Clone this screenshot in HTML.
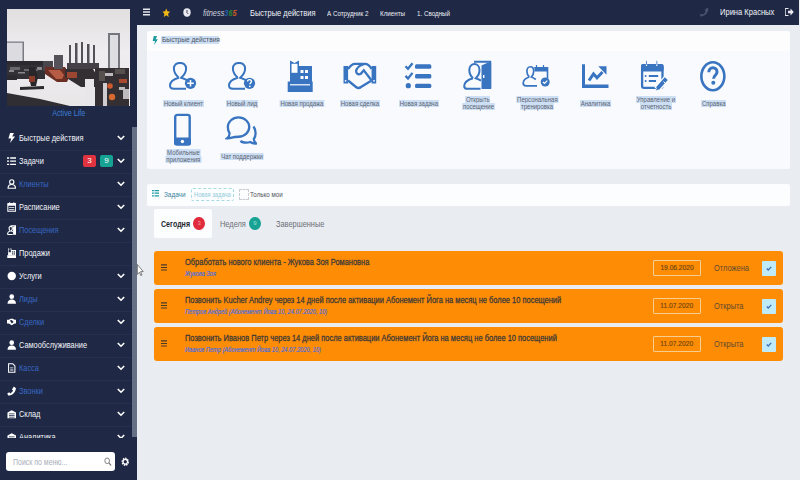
<!DOCTYPE html>
<html><head><meta charset="utf-8">
<style>
*{margin:0;padding:0;box-sizing:border-box}
html,body{width:800px;height:480px;overflow:hidden;background:#e9ecf1;font-family:"Liberation Sans",sans-serif}
.a{position:absolute;white-space:nowrap}
#side{position:absolute;left:0;top:0;width:137px;height:480px;background:#1f2946}
#top{position:absolute;left:137px;top:0;width:662px;height:25px;background:#1f2946}
#main{position:absolute;left:137px;top:25px;width:663px;height:455px;background:#e9ecf1}
.mi{position:absolute;left:0;width:131px;height:23px;color:#f4f4f8;font-size:9px}
.mi .t{position:absolute;left:19px;top:6.2px;transform:scaleX(.82)}
.mi .ic{position:absolute;left:6.5px;top:5.5px;width:9.5px;height:10px}
.mi .ch{position:absolute;left:117px;top:8px;width:8px;height:6px}
.mi.bl .t{color:#3866c0}
.sep{position:absolute;left:0;width:131px;height:1px;background:#283052}
.panel{position:absolute;background:#fcfdff;border-radius:2px}
.qi{position:absolute;width:60px;text-align:center}
.lbl{position:absolute;font-size:7.5px;color:#5a6270;background:#cfe0f4;line-height:7px;padding:0 1px}
.card{position:absolute;left:154px;width:629px;height:34px;background:#ff8c05;border-radius:3px}
.card .tt{position:absolute;left:31px;top:6px;font-size:9px;color:#403b36;-webkit-text-stroke:.3px #403b36}
.card .st{position:absolute;left:31px;top:19px;font-size:6.6px;color:#3d6ee0;font-style:italic;-webkit-text-stroke:.15px #3d6ee0}
.card .hb{position:absolute;left:7px;top:13px;width:6px;height:7px}
.card .dt{position:absolute;left:499px;top:9px;width:48px;height:16px;border:1px solid #f6cf90;border-radius:1px;font-size:8px;color:#6a4412;text-align:center;line-height:14px;-webkit-text-stroke:.15px #6a4412}
.card .ss{position:absolute;left:560px;top:11.5px;font-size:9px;color:#5e4a30}
.card .cb{position:absolute;left:608px;top:9.5px;width:14px;height:15px;background:#bfeaf7;border-radius:1px}

.n{display:inline-block;transform:scaleX(.8);transform-origin:0 0}
.bdg{position:absolute;top:5px;width:13px;height:12px;border-radius:2px;color:#fff;font-size:8px;text-align:center;line-height:12px}
#menu{position:absolute;left:0;top:0;width:131px;height:438px;overflow:hidden}
#sb{position:absolute;left:132px;top:127px;width:5px;height:310px;background:#667084}
#search{position:absolute;left:6px;top:452px;width:109px;height:19px;background:#fff;border-radius:3px}
#search .ph{position:absolute;left:7px;top:4.5px;font-size:8.5px;color:#a9aeb8;transform:scaleX(.82)}

.hl{background:#cddff4}
.lbl{position:absolute;width:80px;text-align:center;font-size:7.5px;line-height:7px;color:#5c6370;background:none}
.lbl2{position:absolute;width:80px;text-align:center;font-size:7.5px;line-height:7px;color:#5c6370}
.lbl2 span{display:block;margin:0 auto;width:max-content;background:#cddff4;transform:scaleX(.8);transform-origin:50% 0;padding:0 1px}
.lbl span{display:inline-block;background:#cddff4;transform:scaleX(.8);transform-origin:50% 0;padding:0 1px}
</style></head>
<body>
<div id="side">
<svg class="a" style="left:7px;top:9px" width="123" height="97" viewBox="0 0 123 97">
<defs><linearGradient id="ceil" x1="0" y1="0" x2="0" y2="1"><stop offset="0" stop-color="#e2dfe0"/><stop offset=".45" stop-color="#efedf0"/><stop offset="1" stop-color="#e8e6e7"/></linearGradient></defs>
<rect width="123" height="97" fill="url(#ceil)"/>
<path d="M0 33h16v19h-16z" fill="#dcdbe0"/>
<path d="M0 32.5h17v1.2h-17zM15.5 33h1.5v20h-1.5z" fill="#7a7a82"/>
<path d="M0 52h38v4h-38z" fill="#2c2a2e"/>
<path d="M0 56h38v14h-38z" fill="#333036"/><path d="M2 61h5v2h-5zM11 63h7v1.5h-7zM30 58h5v3h-5z" fill="#8a888c"/>
<path d="M3 58h10v3h-10zM17 60h14v2h-14z" fill="#6a666c"/>
<path d="M0 66h10v5h-10z" fill="#2c2a2e"/>
<path d="M22 58h6l3 10-2 9h-5l-2-9z" fill="#29262a"/>
<path d="M22 67h6v6h-6z" fill="#8a3c2c"/>
<path d="M13 78l24-1v3l-24 1z" fill="#2e2b2e"/>
<path d="M36 52h10v10h-10z" fill="#4a454a"/>
<path d="M38 58h20l5 8-3 7h-10l-12-8z" fill="#6a2e24"/>
<path d="M41 61h12l4 5-2 4h-6z" fill="#b65c44"/>
<path d="M47 46h9v14h-9z" fill="#56525a"/>
<path d="M62 36h2v18h-2zM68 34h2.5v20h-2.5zM74 33h2v22h-2zM80 35h2.5v20h-2.5zM86 36h2v18h-2z" fill="#555058"/>
<path d="M60 54h32v6h-32z" fill="#454046"/>
<path d="M58 60h28l6 10-4 8h-14l-16-10z" fill="#332f32"/>
<path d="M60 63h10v6h-10z" fill="#9c4632"/>
<path d="M101 24h2v40h-2zM111 24h2v40h-2zM101 24h12v2h-12z" fill="#76767e"/>
<rect x="103" y="26" width="8" height="38" fill="#dedee2"/>
<path d="M0 84l33 6 30 7h-63z" fill="#302e32"/>
<path d="M78 70h9v27h-9z" fill="#e8e6e8"/>
<path d="M88 59h34v38h-34z" fill="#332f32"/><path d="M98 64h8v3h-8zM112 78h6v3h-6z" fill="#bcbabd"/>
<path d="M92 62h6v10h-6zM108 60h10v5h-10z" fill="#56504f"/>
<path d="M96 74h4v23h-4z" fill="#cfcdd0"/>
<circle cx="103" cy="77" r="2.8" fill="#cc5a2c"/>
<circle cx="105" cy="88" r="3.2" fill="#d8692f"/>
<path d="M112 70h8v4h-8z" fill="#a8482e"/>
<path d="M116 80h6v10h-6z" fill="#bdbbbe"/>
</svg>
<div class="a" style="left:0;top:108px;width:137px;text-align:center;font-size:9px;color:#3d7fd8"><span class="n" style="transform-origin:50% 0">Active Life</span></div>
<div id="menu">
<div class="mi" style="top:127px"><svg class="ic" viewBox="0 0 8 9"><path d="M2.5 0h3.5l-1.6 3.2h2.6l-4.5 5.8 1-4h-2.5z" fill="#fff"/></svg><span class="t n">Быстрые действия</span><svg class="ch" viewBox="0 0 8 6"><path d="M0.8 1l3.2 3.2 3.2-3.2" fill="none" stroke="#fff" stroke-width="1.6"/></svg></div>
<div class="sep" style="top:150px"></div>
<div class="mi" style="top:150px"><svg class="ic" viewBox="0 0 9 9"><path d="M0 1h2v1.3h-2zM3 1h6v1.3h-6zM0 4h2v1.3h-2zM3 4h6v1.3h-6zM0 7h2v1.3h-2zM3 7h6v1.3h-6z" fill="#fff"/></svg><span class="t n">Задачи</span><svg class="ch" viewBox="0 0 8 6"><path d="M0.8 1l3.2 3.2 3.2-3.2" fill="none" stroke="#fff" stroke-width="1.6"/></svg><span class="bdg" style="left:83px;background:#e0333f">3</span><span class="bdg" style="left:100px;background:#16a394">9</span></div>
<div class="sep" style="top:173px"></div>
<div class="mi bl" style="top:173px"><svg class="ic" viewBox="0 0 9 9"><circle cx="4.5" cy="2.5" r="2" fill="none" stroke="#fff" stroke-width="1.1"/><path d="M1 8.5c0-2.5 1.5-3.5 3.5-3.5s3.5 1 3.5 3.5z" fill="none" stroke="#fff" stroke-width="1.1"/></svg><span class="t n">Клиенты</span><svg class="ch" viewBox="0 0 8 6"><path d="M0.8 1l3.2 3.2 3.2-3.2" fill="none" stroke="#fff" stroke-width="1.6"/></svg></div>
<div class="sep" style="top:196px"></div>
<div class="mi" style="top:196px"><svg class="ic" viewBox="0 0 9 9"><rect x="0.8" y="1.3" width="7.4" height="7.2" fill="none" stroke="#fff" stroke-width="1"/><path d="M0.8 1.3h7.4v2h-7.4z M2 0h1v2h-1zM6 0h1v2h-1z M2 4.5h5v.8h-5zM2 6.3h5v.8h-5z" fill="#fff"/></svg><span class="t n">Расписание</span><svg class="ch" viewBox="0 0 8 6"><path d="M0.8 1l3.2 3.2 3.2-3.2" fill="none" stroke="#fff" stroke-width="1.6"/></svg></div>
<div class="sep" style="top:219px"></div>
<div class="mi bl" style="top:219px"><svg class="ic" viewBox="0 0 29 30" preserveAspectRatio="none"><path d="M11 2.5H26.5V28" fill="none" stroke="#fff" stroke-width="3.5"/><path d="M18.5 6L25 3H28.5V29.5H18.5z" fill="#fff"/><path d="M10 18.2C7.2 15.6 6.3 12.6 6.3 10 6.3 6.3 8.7 4.1 11.4 4.1S16.5 6.3 16.5 10C16.5 12.6 15.6 15.6 12.8 18.2 14.8 18.9 16.5 19.7 18 20.7M10 18.2C5 19.7 1.8 22.7 1.8 25.9 1.8 27.9 3 28.4 4.6 28.4H17.5" fill="none" stroke="#fff" stroke-width="3.4"/></svg><span class="t n">Посещения</span><svg class="ch" viewBox="0 0 8 6"><path d="M0.8 1l3.2 3.2 3.2-3.2" fill="none" stroke="#fff" stroke-width="1.6"/></svg></div>
<div class="sep" style="top:242px"></div>
<div class="mi" style="top:242px"><svg class="ic" viewBox="0 0 26 30" preserveAspectRatio="none"><path d="M3 0.5L7.5 3 12 0.5V6h13v16h-22z" fill="#fff"/><rect x="4.5" y="3.8" width="6" height="9" fill="#1f2946"/><rect x="13.5" y="10" width="3.5" height="3.5" fill="#1f2946"/><rect x="18.5" y="10" width="3.5" height="3.5" fill="#1f2946"/><rect x="13.5" y="16" width="3.5" height="3.5" fill="#1f2946"/><rect x="18.5" y="16" width="3.5" height="3.5" fill="#1f2946"/><rect x="0.7" y="21.5" width="25" height="8.5" fill="#fff"/></svg><span class="t n">Продажи</span></div>
<div class="sep" style="top:265px"></div>
<div class="mi" style="top:265px"><svg class="ic" viewBox="0 0 9 9"><circle cx="4.5" cy="4.5" r="4" fill="#fff"/></svg><span class="t n">Услуги</span><svg class="ch" viewBox="0 0 8 6"><path d="M0.8 1l3.2 3.2 3.2-3.2" fill="none" stroke="#fff" stroke-width="1.6"/></svg></div>
<div class="sep" style="top:288px"></div>
<div class="mi bl" style="top:288px"><svg class="ic" viewBox="0 0 9 9"><circle cx="4.5" cy="2.3" r="2.2" fill="#fff"/><path d="M0.5 9c0-3 2-4 4-4s4 1 4 4z" fill="#fff"/></svg><span class="t n">Лиды</span><svg class="ch" viewBox="0 0 8 6"><path d="M0.8 1l3.2 3.2 3.2-3.2" fill="none" stroke="#fff" stroke-width="1.6"/></svg></div>
<div class="sep" style="top:311px"></div>
<div class="mi bl" style="top:311px"><svg class="ic" viewBox="0 0 10 9"><path d="M0 2h2l2-1h2l2 1h2v4h-2l-3 2-3-2h-2z" fill="#fff"/><path d="M3 3l2 -0.5 2 2-2 1.5z" fill="#1f2946"/></svg><span class="t n">Сделки</span><svg class="ch" viewBox="0 0 8 6"><path d="M0.8 1l3.2 3.2 3.2-3.2" fill="none" stroke="#fff" stroke-width="1.6"/></svg></div>
<div class="sep" style="top:334px"></div>
<div class="mi" style="top:334px"><svg class="ic" viewBox="0 0 9 9"><circle cx="4.5" cy="2.3" r="2.2" fill="#fff"/><path d="M0.5 9c0-3 2-4 4-4s4 1 4 4z" fill="#fff"/></svg><span class="t n">Самообслуживание</span><svg class="ch" viewBox="0 0 8 6"><path d="M0.8 1l3.2 3.2 3.2-3.2" fill="none" stroke="#fff" stroke-width="1.6"/></svg></div>
<div class="sep" style="top:357px"></div>
<div class="mi bl" style="top:357px"><svg class="ic" viewBox="0 0 9 9"><path d="M1.5 0.5h4l2 2v6h-6z" fill="none" stroke="#fff" stroke-width="1"/><path d="M3 4h3v.8h-3zM3 6h3v.8h-3z" fill="#fff"/></svg><span class="t n">Касса</span><svg class="ch" viewBox="0 0 8 6"><path d="M0.8 1l3.2 3.2 3.2-3.2" fill="none" stroke="#fff" stroke-width="1.6"/></svg></div>
<div class="sep" style="top:380px"></div>
<div class="mi bl" style="top:380px"><svg class="ic" viewBox="0 0 9 9"><path d="M6.5 0.3l2 1.5c-.5 4-3.5 7-7.3 7l-1-2 2-1 1 1c1-.5 2-1.5 2.5-2.7l-1-1z" fill="#fff"/></svg><span class="t n">Звонки</span><svg class="ch" viewBox="0 0 8 6"><path d="M0.8 1l3.2 3.2 3.2-3.2" fill="none" stroke="#fff" stroke-width="1.6"/></svg></div>
<div class="sep" style="top:403px"></div>
<div class="mi" style="top:403px"><svg class="ic" viewBox="0 0 10 9"><path d="M0.5 3l4.5-2.5 4.5 2.5v6h-9z" fill="#fff"/><path d="M2 4h6v.8h-6zM2 5.7h6v.8h-6zM2 7.4h6v.8h-6z" fill="#1f2946"/></svg><span class="t n">Склад</span><svg class="ch" viewBox="0 0 8 6"><path d="M0.8 1l3.2 3.2 3.2-3.2" fill="none" stroke="#fff" stroke-width="1.6"/></svg></div>
<div class="sep" style="top:426px"></div>
<div class="mi" style="top:426px"><svg class="ic" viewBox="0 0 10 9"><path d="M0.5 3l4.5-2.5 4.5 2.5v6h-9z" fill="#fff"/><path d="M2 4h6v.8h-6zM2 5.7h6v.8h-6zM2 7.4h6v.8h-6z" fill="#1f2946"/></svg><span class="t n">Аналитика</span><svg class="ch" viewBox="0 0 8 6"><path d="M0.8 1l3.2 3.2 3.2-3.2" fill="none" stroke="#fff" stroke-width="1.6"/></svg></div>
</div>
<div id="sb"></div>
<div id="search"><span class="ph n">Поиск по меню...</span>
<svg class="a" style="left:98px;top:5px" width="7.5" height="9" viewBox="0 0 9 9" preserveAspectRatio="none"><circle cx="3.8" cy="3.8" r="2.8" fill="none" stroke="#777" stroke-width="1"/><path d="M6 6l2.5 2.5" stroke="#777" stroke-width="1.2"/></svg>
</div>
<svg class="a" style="left:120.5px;top:456.8px" width="8.5" height="9.5" viewBox="0 0 10 10" preserveAspectRatio="none"><circle cx="5" cy="5" r="3.3" fill="none" stroke="#fff" stroke-width="2.2" stroke-dasharray="1.6 .9"/><circle cx="5" cy="5" r="2.6" fill="none" stroke="#fff" stroke-width="1.3"/></svg>
</div>
<div id="top">
<svg class="a" style="left:6px;top:8.3px" width="7" height="8" viewBox="0 0 8 8" preserveAspectRatio="none"><path d="M0 0.5h8v1.4h-8zM0 3.3h8v1.4h-8zM0 6.1h8v1.4h-8z" fill="#e8e8ee"/></svg>
<svg class="a" style="left:25px;top:7.5px" width="8.5" height="9.8" viewBox="0 0 24 24" preserveAspectRatio="none"><path d="M12 1l3.2 7.1 7.8.8-5.8 5.2 1.7 7.7-6.9-4-6.9 4 1.7-7.7-5.8-5.2 7.8-.8z" fill="#f5b915"/></svg>
<svg class="a" style="left:46px;top:8px" width="8" height="9" viewBox="0 0 10 10" preserveAspectRatio="none"><circle cx="5" cy="5" r="4.6" fill="#e9e9ef"/><path d="M5 2.2v3l1.6 1.4" fill="none" stroke="#1e2445" stroke-width="1"/></svg>
<div class="a" style="left:66px;top:7.5px;font-size:9px;font-style:italic;color:#d0d3de"><span class="n" style="transform:scaleX(.82)">fitness<b style="color:#2262a8;font-weight:bold">3</b><b style="color:#2a8535;font-weight:bold">6</b><b style="color:#cc5a22;font-weight:bold">5</b></span></div>
<div class="a" style="left:113px;top:6.6px;font-size:9.5px;color:#f2f3f7"><span class="n" style="transform:scaleX(.79)">Быстрые действия</span></div>
<div class="a" style="left:190px;top:9px;font-size:8px;color:#eceef4"><span class="n" style="transform:scaleX(.78)">А Сотрудник 2</span></div>
<div class="a" style="left:243px;top:9px;font-size:8px;color:#eceef4"><span class="n" style="transform:scaleX(.78)">Клиенты</span></div>
<div class="a" style="left:280px;top:9px;font-size:8px;color:#eceef4"><span class="n" style="transform:scaleX(.78)">1. Сводный</span></div>
<svg class="a" style="left:562px;top:7px" width="10" height="10" viewBox="0 0 10 10"><path d="M8.2 0.5l1.3 1.6c-.6 4.5-3.8 7.3-7.8 7.4l-1.2-1.4 2.2-1.4 1 .8c1.3-.7 2.3-1.9 2.9-3.3l-.9-.9z" fill="#4a5070"/></svg>
<div class="a" style="left:582.5px;top:7.3px;font-size:9px;color:#f2f3f7"><span class="n" style="transform:scaleX(.84)">Ирина Красных</span></div>
<svg class="a" style="left:648px;top:8px" width="9" height="8" viewBox="0 0 9 8"><path d="M3.5 0.5h-2.5a.8.8 0 0 0-.8.8v5.4a.8.8 0 0 0 .8.8h2.5" fill="none" stroke="#e9e9ef" stroke-width="1.1"/><path d="M3 2.8h2.5v-2.3l3.3 3.5-3.3 3.5v-2.3h-2.5z" fill="#e9e9ef"/></svg>
</div>
<div id="main"></div>
<div class="panel" style="left:147px;top:31px;width:643px;height:138px;background:linear-gradient(#fdfdfd 0,#fdfdfd 20px,#f9fafd 20px)"></div>
<svg class="a" style="left:152px;top:36px" width="6" height="9" viewBox="0 0 6 9"><path d="M1.8 0h3.2l-1.3 3.3h2.2l-3.7 5.7.8-4h-2.3z" fill="#1b9aa0"/></svg>
<div class="a hl" style="left:161px;top:35.5px;width:58px;height:8.5px"></div>
<div class="a" style="left:161.5px;top:35px;font-size:8px;color:#4d5360"><span class="n" style="transform:scaleX(.83)">Быстрые действия</span></div>
<svg class="a" style="left:169px;top:62px" width="28" height="29" viewBox="0 0 28 29"><path d="M9.8 15.8C6.3 12.7 4.9 9.6 4.9 6.6 4.9 2.8 7.7 0.9 11 0.9S17.1 2.8 17.1 6.6C17.1 9.6 15.7 12.7 12.2 15.8 14.5 16.5 17 17.5 19 18.7M9.8 15.8C4.5 17.3 1 20 1 23.6 1 25.9 2.5 26.8 5 26.8H17" fill="none" stroke="#3874c0" stroke-width="2"/><circle cx="21.5" cy="21.3" r="5.6" fill="#3874c0"/><path d="M21.5 18v6.6M18.2 21.3h6.6" stroke="#fff" stroke-width="1.5"/></svg><svg class="a" style="left:227.5px;top:62px" width="28" height="29" viewBox="0 0 28 29"><path d="M9.8 15.8C6.3 12.7 4.9 9.6 4.9 6.6 4.9 2.8 7.7 0.9 11 0.9S17.1 2.8 17.1 6.6C17.1 9.6 15.7 12.7 12.2 15.8 14.5 16.5 17 17.5 19 18.7M9.8 15.8C4.5 17.3 1 20 1 23.6 1 25.9 2.5 26.8 5 26.8H17" fill="none" stroke="#3874c0" stroke-width="2"/><circle cx="21.5" cy="21.3" r="5.6" fill="#3874c0"/><path d="M19.6 19.6c0-1.3 .9-2 1.9-2s1.9 .7 1.9 1.9c0 1.3-1.6 1.5-1.6 2.8" fill="none" stroke="#fff" stroke-width="1.4"/><circle cx="21.8" cy="24.3" r=".85" fill="#fff"/></svg><svg class="a" style="left:287px;top:60px" width="26" height="32" viewBox="0 0 26 32"><path d="M3 0.5L7.5 3 12 0.5V6h13v16h-22z" fill="#3874c0"/><rect x="4.5" y="3.8" width="6" height="9" fill="#fcfdff"/><rect x="13.5" y="10" width="3" height="3" fill="#fcfdff"/><rect x="18" y="10" width="3" height="3" fill="#fcfdff"/><rect x="13.5" y="16" width="3" height="3" fill="#fcfdff"/><rect x="18" y="16" width="3" height="3" fill="#fcfdff"/><rect x="0.7" y="21.5" width="25" height="10.5" fill="#3874c0"/><rect x="3" y="24.2" width="20" height="1.2" fill="#fcfdff"/></svg><svg class="a" style="left:343px;top:62px" width="34" height="28" viewBox="0 0 34 28"><rect x="0.5" y="4" width="4.6" height="17.5" fill="#3874c0"/><rect x="28.6" y="4" width="4.6" height="17.5" fill="#3874c0"/><circle cx="2.6" cy="18.8" r=".9" fill="#fcfdff"/><circle cx="31" cy="18.8" r=".9" fill="#fcfdff"/><path d="M5 7C7 4 9 1.8 12 1.8H22C25 1.8 27 4 28.6 7M5 18.5L13 25Q15.5 27 18 25L28.6 18.5M21.5 2C17.5 3 14.5 5 13.3 8 12.6 11 15 13.5 17.8 11.8L20.8 8.3 28.6 18.5" fill="none" stroke="#3874c0" stroke-width="2.3"/></svg><svg class="a" style="left:404px;top:62px" width="28" height="27" viewBox="0 0 28 27"><path d="M1.5 4.2L4 6.8 8.5 1.2M1.5 13.9L4 16.5 8.5 10.9" fill="none" stroke="#3874c0" stroke-width="2.3"/><rect x="11" y="2.3" width="16.3" height="4.4" rx="1.5" fill="#3874c0"/><rect x="11" y="12" width="16.3" height="4.4" rx="1.5" fill="#3874c0"/><rect x="11" y="21.7" width="16.3" height="4.4" rx="1.5" fill="#3874c0"/><circle cx="4.3" cy="23.7" r="2.6" fill="#3874c0"/></svg><svg class="a" style="left:463px;top:60px" width="29" height="30" viewBox="0 0 29 30"><path d="M11 1.8H27.2V28" fill="none" stroke="#3874c0" stroke-width="2"/><path d="M18.5 5.5L25 2.5H28.2V29H18.5z" fill="#3874c0"/><rect x="20" y="15" width="1.4" height="3" fill="#fcfdff"/><path d="M10 18.2C7.2 15.6 6.3 12.6 6.3 10 6.3 6.3 8.7 4.1 11.4 4.1S16.5 6.3 16.5 10C16.5 12.6 15.6 15.6 12.8 18.2 14.8 18.9 16.5 19.7 18 20.7M10 18.2C5 19.7 1.2 22.7 1.2 25.9 1.2 27.9 2.6 28.8 4.6 28.8H17.5" fill="none" stroke="#3874c0" stroke-width="2"/></svg><svg class="a" style="left:522px;top:64px" width="29" height="24" viewBox="0 0 29 24"><path d="M12.5 3.8H25.5V14.5" fill="none" stroke="#3874c0" stroke-width="1.6"/><rect x="12.5" y="3" width="13.5" height="4.5" fill="#3874c0"/><path d="M14.5 1v3M21.5 1v3" stroke="#3874c0" stroke-width="1.2"/><path d="M7.3 13C5.4 11.2 4.9 9 4.9 7.3 4.9 4.4 6.4 2.75 8.3 2.75S11.7 4.4 11.7 7.3C11.7 9 11.2 11.2 9.3 13 11 13.6 12.5 14.4 13.8 15.5M7.3 13C3.6 14.2 1.2 16.6 1.2 19.3 1.2 21 2.4 21.9 4.2 21.9H15" fill="none" stroke="#3874c0" stroke-width="1.7"/><circle cx="23.2" cy="18" r="4.5" fill="#3874c0"/><path d="M21 18l1.5 1.5 2.8-2.8" fill="none" stroke="#fff" stroke-width="1.2"/></svg><svg class="a" style="left:582px;top:64px" width="27" height="25" viewBox="0 0 27 25"><path d="M0 0.3H3V20.5H26.5V24H0z" fill="#3874c0"/><path d="M7 16.5L11.5 10 15 13.8 20.5 8" fill="none" stroke="#3874c0" stroke-width="3"/><path d="M16.3 2.3H24.5V10.8z" fill="#3874c0"/></svg><svg class="a" style="left:640px;top:60px" width="28" height="31" viewBox="0 0 28 31"><rect x="2.1" y="5.2" width="20.4" height="22.6" rx="1.8" fill="none" stroke="#3874c0" stroke-width="2.3"/><rect x="1" y="4" width="22.6" height="7.5" rx="1.8" fill="#3874c0"/><path d="M6.5 1v5M16.8 1v5" stroke="#fcfdff" stroke-width="1.2"/><path d="M6.5 0.8v4M16.8 0.8v4" stroke="#3874c0" stroke-width=".8"/><circle cx="5.6" cy="16" r="1" fill="#3874c0"/><rect x="8.8" y="15" width="9.4" height="2" fill="#3874c0"/><circle cx="5.6" cy="21" r="1" fill="#3874c0"/><rect x="8.8" y="20" width="7.2" height="2" fill="#3874c0"/><path d="M16.8 29.5L26.5 18.5" stroke="#fcfdff" stroke-width="6.5"/><path d="M17.5 28.5L26.3 18.7" stroke="#3874c0" stroke-width="4"/><path d="M16 30.5l1.2-3.5 2.2 2z" fill="#3874c0"/><path d="M23.5 21.5l1.8 1.8" stroke="#fcfdff" stroke-width="1"/></svg><svg class="a" style="left:699px;top:60px" width="28" height="32" viewBox="0 0 28 32"><ellipse cx="13.85" cy="16.2" rx="11.5" ry="14" fill="none" stroke="#3874c0" stroke-width="2.6"/><path d="M9.8 12.3c0-2.8 1.8-4.5 4.1-4.5s4.1 1.6 4.1 4.2c0 3.3-3.4 3.3-3.4 6.8" fill="none" stroke="#3874c0" stroke-width="3"/><circle cx="14.3" cy="22.8" r="2" fill="#3874c0"/></svg><svg class="a" style="left:173px;top:113px" width="19" height="33" viewBox="0 0 19 33"><rect x="2.2" y="1.9" width="14.5" height="29.3" rx="2" fill="none" stroke="#3874c0" stroke-width="2.4"/><rect x="1" y="24.5" width="17" height="8" rx="2" fill="#3874c0"/><circle cx="9.4" cy="28.5" r="1.7" fill="#fcfdff"/></svg><svg class="a" style="left:225px;top:115px" width="32" height="30" viewBox="0 0 32 30"><path d="M4.6 18.3C3.3 16.6 2.85 14.5 2.85 12.1 2.85 6.7 7.6 2.45 13.5 2.45S24.25 6.7 24.25 12.1 19.4 21.75 13.5 21.75C11 21.75 8.8 22 6.8 22.6 5.3 23.1 3.5 23.4 2.2 23.3 3.7 22.2 4.5 20.4 4.6 18.3z" fill="none" stroke="#3874c0" stroke-width="2.3"/><path d="M28.5 11.5C30 13.6 30.6 15.8 30.6 18.2c0 2.2-.6 4.2-1.8 5.8.1 2 1 3.6 2.4 4.5-2.4.3-4.6-.5-6-1.5-1.9.7-4 .8-6 .5-1.6-.2-3-.9-3.8-1.5" fill="none" stroke="#3874c0" stroke-width="2.3"/></svg>
<div class="lbl" style="left:143.6px;top:100px"><span>Новый клиент</span></div><div class="lbl" style="left:202.3px;top:100px"><span>Новый лид</span></div><div class="lbl" style="left:261.5px;top:100px"><span>Новая продажа</span></div><div class="lbl" style="left:320px;top:100px"><span>Новая сделка</span></div><div class="lbl" style="left:379.2px;top:100px"><span>Новая задача</span></div><div class="lbl2" style="left:438.2px;top:96px"><span>Открыть</span><span>посещение</span></div><div class="lbl2" style="left:497px;top:96px"><span>Персональная</span><span>тренировка</span></div><div class="lbl" style="left:556px;top:100px"><span>Аналитика</span></div><div class="lbl2" style="left:615.7px;top:96px"><span>Управление и</span><span>отчетность</span></div><div class="lbl" style="left:674px;top:100px"><span>Справка</span></div><div class="lbl2" style="left:143.4px;top:149px"><span>Мобильные</span><span>приложения</span></div><div class="lbl" style="left:201.9px;top:153px"><span>Чат поддержки</span></div>

<div class="panel" style="left:147px;top:184px;width:643px;height:22px"></div>
<svg class="a" style="left:152px;top:190px" width="7" height="6.5" viewBox="0 0 5 7" preserveAspectRatio="none"><path d="M0 0h1.3v1.3h-1.3zM1.8 0h3.2v1.3h-3.2zM0 2.8h1.3v1.3h-1.3zM1.8 2.8h3.2v1.3h-3.2zM0 5.6h1.3v1.3h-1.3zM1.8 5.6h3.2v1.3h-3.2z" fill="#1b9aa0"/></svg>
<div class="a" style="left:163.8px;top:189.5px;font-size:8px;color:#357f98"><span class="n" style="transform:scaleX(.8)">Задачи</span></div>
<div class="a" style="left:190.5px;top:188px;width:43px;height:12.5px;border:1px dashed #a6dbe3;border-radius:2px"></div>
<div class="a" style="left:194px;top:191px;font-size:7px;color:#8fcbd8"><span class="n" style="transform:scaleX(.82)">Новая задача</span></div>
<div class="a" style="left:238.5px;top:188.5px;width:10px;height:11.5px;border:1px dashed #c9ccd2;border-radius:1px"></div>
<div class="a" style="left:250px;top:190px;font-size:8px;color:#50545c"><span class="n" style="transform:scaleX(.78)">Только мои</span></div>

<div class="a" style="left:154px;top:209px;width:58px;height:29px;background:#fcfdff;border-radius:2px"></div>
<div class="a" style="left:161px;top:218px;font-size:9.5px;font-weight:bold;color:#22252b"><span class="n" style="transform:scaleX(.745)">Сегодня</span></div>
<div class="a" style="left:193.3px;top:217px;width:11.6px;height:13.4px;border-radius:50%;background:#e02b3c;color:#f0a0a8;font-size:6px;text-align:center;line-height:13.4px">3</div>
<div class="a" style="left:220px;top:218px;font-size:9.5px;color:#6d7077"><span class="n" style="transform:scaleX(.78)">Неделя</span></div>
<div class="a" style="left:249.2px;top:217px;width:11.6px;height:13.4px;border-radius:50%;background:#17a294;color:#9fe0d8;font-size:6px;text-align:center;line-height:13.4px">9</div>
<div class="a" style="left:276px;top:218px;font-size:9.5px;color:#6d7077"><span class="n" style="transform:scaleX(.78)">Завершенные</span></div>
<div class="card" style="top:251px">
<svg class="hb" viewBox="0 0 6 7"><path d="M0 0.3h6v1.1h-6zM0 2.9h6v1.1h-6zM0 5.5h6v1.1h-6z" fill="#4a3a28"/></svg>
<div class="tt"><span class="n" style="transform:scaleX(.83)">Обработать нового клиента - Жукова Зоя Романовна</span></div>
<div class="st"><span class="n" style="transform:scaleX(.86)">Жукова Зоя</span></div>
<div class="dt"><span class="n" style="transform:scaleX(.83);transform-origin:50% 0">19.06.2020</span></div>
<div class="ss"><span class="n" style="transform:scaleX(.83)">Отложена</span></div>
<div class="cb"><svg style="position:absolute;left:4px;top:5px" width="6" height="5" viewBox="0 0 7 6"><path d="M0.8 3l1.8 1.8 3.6-3.8" fill="none" stroke="#3a6fb8" stroke-width="1.5"/></svg></div>
</div>
<div class="card" style="top:289px">
<svg class="hb" viewBox="0 0 6 7"><path d="M0 0.3h6v1.1h-6zM0 2.9h6v1.1h-6zM0 5.5h6v1.1h-6z" fill="#4a3a28"/></svg>
<div class="tt"><span class="n" style="transform:scaleX(.83)">Позвонить Kucher Andrey через 14 дней после активации Абонемент Йога на месяц не более 10 посещений</span></div>
<div class="st"><span class="n" style="transform:scaleX(.86)">Петров Андрей (Абонемент Йога 10, 24.07.2020, 10)</span></div>
<div class="dt"><span class="n" style="transform:scaleX(.83);transform-origin:50% 0">11.07.2020</span></div>
<div class="ss"><span class="n" style="transform:scaleX(.83)">Открыта</span></div>
<div class="cb"><svg style="position:absolute;left:4px;top:5px" width="6" height="5" viewBox="0 0 7 6"><path d="M0.8 3l1.8 1.8 3.6-3.8" fill="none" stroke="#3a6fb8" stroke-width="1.5"/></svg></div>
</div>
<div class="card" style="top:327px">
<svg class="hb" viewBox="0 0 6 7"><path d="M0 0.3h6v1.1h-6zM0 2.9h6v1.1h-6zM0 5.5h6v1.1h-6z" fill="#4a3a28"/></svg>
<div class="tt"><span class="n" style="transform:scaleX(.83)">Позвонить Иванов Петр через 14 дней после активации Абонемент Йога на месяц не более 10 посещений</span></div>
<div class="st"><span class="n" style="transform:scaleX(.86)">Иванов Петр (Абонемент Йога 10, 24.07.2020, 10)</span></div>
<div class="dt"><span class="n" style="transform:scaleX(.83);transform-origin:50% 0">11.07.2020</span></div>
<div class="ss"><span class="n" style="transform:scaleX(.83)">Открыта</span></div>
<div class="cb"><svg style="position:absolute;left:4px;top:5px" width="6" height="5" viewBox="0 0 7 6"><path d="M0.8 3l1.8 1.8 3.6-3.8" fill="none" stroke="#3a6fb8" stroke-width="1.5"/></svg></div>
</div>
<svg class="a" style="left:137px;top:264px" width="6.5" height="12" viewBox="0 0 8 12" preserveAspectRatio="none"><path d="M0.5 0.5v10l2.5-2.3 1.7 3.5 1.4-.7-1.7-3.4h3.3z" fill="#fff" stroke="#555" stroke-width=".8"/></svg>
</body></html>
